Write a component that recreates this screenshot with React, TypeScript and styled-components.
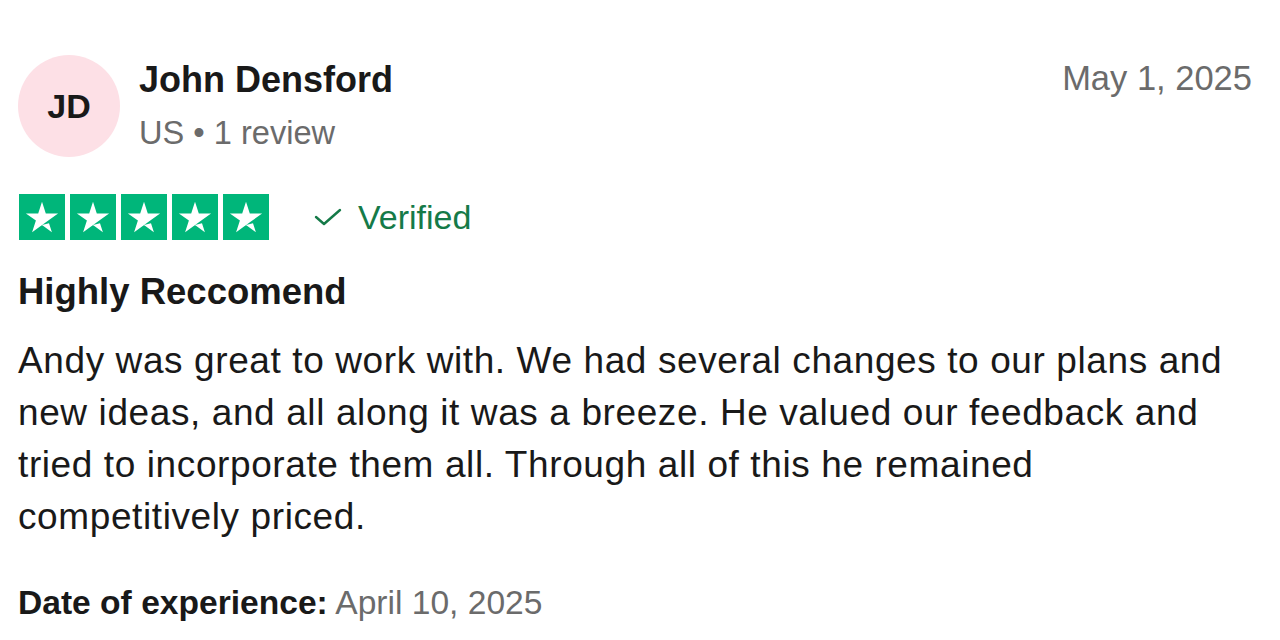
import styled, { createGlobalStyle } from 'styled-components'

const GlobalStyle = createGlobalStyle`
  body {
    margin: 0;
    background: #ffffff;
    font-family: "Liberation Sans", Arial, sans-serif;
    color: #191919;
  }
`

const Card = styled.article`
  width: 1234px;
  padding: 55px 0 0 18px;
`
const Header = styled.header`
  display: flex;
  align-items: flex-start;
`
const Avatar = styled.div`
  flex-shrink: 0;
  display: flex;
  align-items: center;
  justify-content: center;
  width: 102px;
  height: 102px;
  border-radius: 50%;
  background: #fde0e6;
  font-size: 34px;
  font-weight: 700;
  color: #191919;
`
const Who = styled.div`
  flex-grow: 1;
  margin-left: 19px;
  padding-top: 5px;
`
const Name = styled.div`
  font-size: 36px;
  font-weight: 700;
  line-height: 40px;
`
const Meta = styled.div`
  margin-top: 15px;
  font-size: 32.6px;
  line-height: 36px;
  color: #6b6b6b;
`
const PostDate = styled.time`
  padding-top: 3px;
  font-size: 34.5px;
  line-height: 40px;
  color: #6b6b6b;
`
const RatingRow = styled.div`
  display: flex;
  align-items: center;
  margin-top: 37px;
`
const Stars = styled.div`
  display: flex;
  gap: 5px;
  margin-left: 1px;
`
const StarBox = styled.span<{ $on: boolean }>`
  display: flex;
  width: 46px;
  height: 46px;
  background: ${p => (p.$on ? '#00b67a' : '#dcdce6')};
`
const Verified = styled.span`
  display: flex;
  align-items: center;
  gap: 16px;
  margin-left: 45px;
  font-size: 34px;
  line-height: 40px;
  color: #157a48;
`
const Title = styled.h2`
  margin: 32px 0 0;
  font-size: 36.5px;
  font-weight: 700;
  line-height: 40px;
`
const Body = styled.p`
  margin: 23px 0 0;
  font-size: 37px;
  letter-spacing: 0.6px;
  line-height: 52px;
`
const Experience = styled.p`
  margin: 40px 0 0;
  font-size: 33.6px;
  line-height: 40px;
  color: #6b6b6b;
  b {
    color: #191919;
  }
`

const Star = () => (
  <svg width="46" height="46" viewBox="0 0 46 46">
    <path
      fill="#fff"
      d="M23 31l7-1.8 2.9 9L23 31zm16.1-11.6H26.8L23 7.8l-3.8 11.6H6.9l10 7.2-3.8 11.6 10-7.2 6.2-4.4 9.8-7.2z"
    />
  </svg>
)

const Check = () => (
  <svg width="28" height="20" viewBox="0 0 28 20" fill="none" stroke="#157a48" strokeWidth="2.4" strokeLinecap="round" strokeLinejoin="round">
    <path d="M2 10l8 7L26 3" />
  </svg>
)

export default function App() {
  return (
    <>
      <GlobalStyle />
      <Card>
        <Header>
          <Avatar>JD</Avatar>
          <Who>
            <Name>John Densford</Name>
            <Meta>US • 1 review</Meta>
          </Who>
          <PostDate>May 1, 2025</PostDate>
        </Header>
        <RatingRow>
          <Stars>
            {[0, 1, 2, 3, 4].map(i => (
              <StarBox key={i} $on>
                <Star />
              </StarBox>
            ))}
          </Stars>
          <Verified>
            <Check />
            Verified
          </Verified>
        </RatingRow>
        <Title>Highly Reccomend</Title>
        <Body>
          Andy was great to work with. We had several changes to our plans and new ideas, and all along it was a
          breeze. He valued our feedback and tried to incorporate them all. Through all of this he remained
          competitively priced.
        </Body>
        <Experience>
          <b>Date of experience:</b> April 10, 2025
        </Experience>
      </Card>
    </>
  )
}
